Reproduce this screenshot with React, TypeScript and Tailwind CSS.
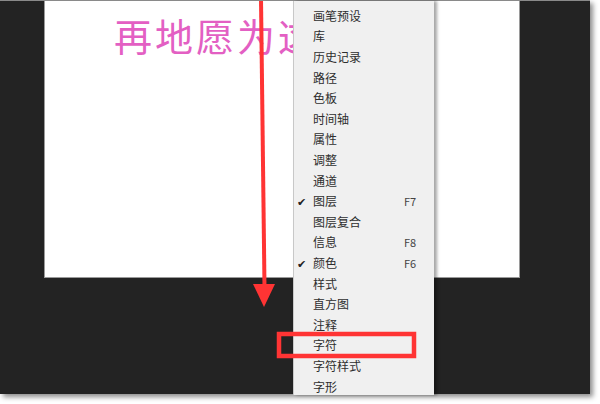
import React from "react";

const items: { label: string; check?: boolean; key?: string }[] = [
  { label: "画笔" },
  { label: "画笔预设" },
  { label: "库" },
  { label: "历史记录" },
  { label: "路径" },
  { label: "色板" },
  { label: "时间轴" },
  { label: "属性" },
  { label: "调整" },
  { label: "通道" },
  { label: "图层", check: true, key: "F7" },
  { label: "图层复合" },
  { label: "信息", key: "F8" },
  { label: "颜色", check: true, key: "F6" },
  { label: "样式" },
  { label: "直方图" },
  { label: "注释" },
  { label: "字符" },
  { label: "字符样式" },
  { label: "字形" },
];

function WindowMenu() {
  return (
    <div className="absolute left-[293px] top-0 w-[141px] h-[394px] overflow-hidden bg-[#f0f0f0] border-l border-[#c8c8c8] shadow-[3px_0_3px_rgba(0,0,0,0.35)]">
      <div className="-mt-[16px] flex flex-col">
        {items.map((it) => (
          <div key={it.label} className="flex h-[20.6px] items-center text-[12px] leading-none text-[#2e2e2e]">
            <span className="w-[19px] pl-[3px] text-[11px] text-[#222]">{it.check ? "✔" : ""}</span>
            <span className="flex-1">{it.label}</span>
            <span className="w-[30px] text-[11px] text-[#444]">{it.key ?? ""}</span>
          </div>
        ))}
      </div>
    </div>
  );
}

export default function App() {
  return (
    <div
      className="w-[600px] h-[404px] bg-white overflow-hidden"
      style={{ fontFamily: '"Noto Sans CJK SC", "Noto Sans", sans-serif' }}
    >
      <div className="relative w-[590px] h-[394px] bg-[#232323] border-t border-[#8a8a8a] shadow-[3px_3px_5px_rgba(0,0,0,0.45)]">
        {/* 画布 */}
        <div className="ml-[44px] w-[476px] h-[277px] bg-white border-l border-r border-b border-[#9a9a9a]">
          <div className="pl-[69px] pt-[11px] text-[38px] leading-[46px] tracking-[3px] text-[#e35fc3]">
            再地愿为这
          </div>
        </div>

        <WindowMenu />

        {/* 标注 */}
        <svg className="absolute left-0 top-0" width="590" height="394">
          <line x1="261" y1="-2" x2="264.5" y2="286" stroke="#ff3434" strokeWidth="4" />
          <polygon points="253,283 275,283 264,306" fill="#ff3434" />
          <rect x="279" y="333" width="135" height="22" fill="none" stroke="#ff3434" strokeWidth="4.5" />
        </svg>
      </div>
    </div>
  );
}
